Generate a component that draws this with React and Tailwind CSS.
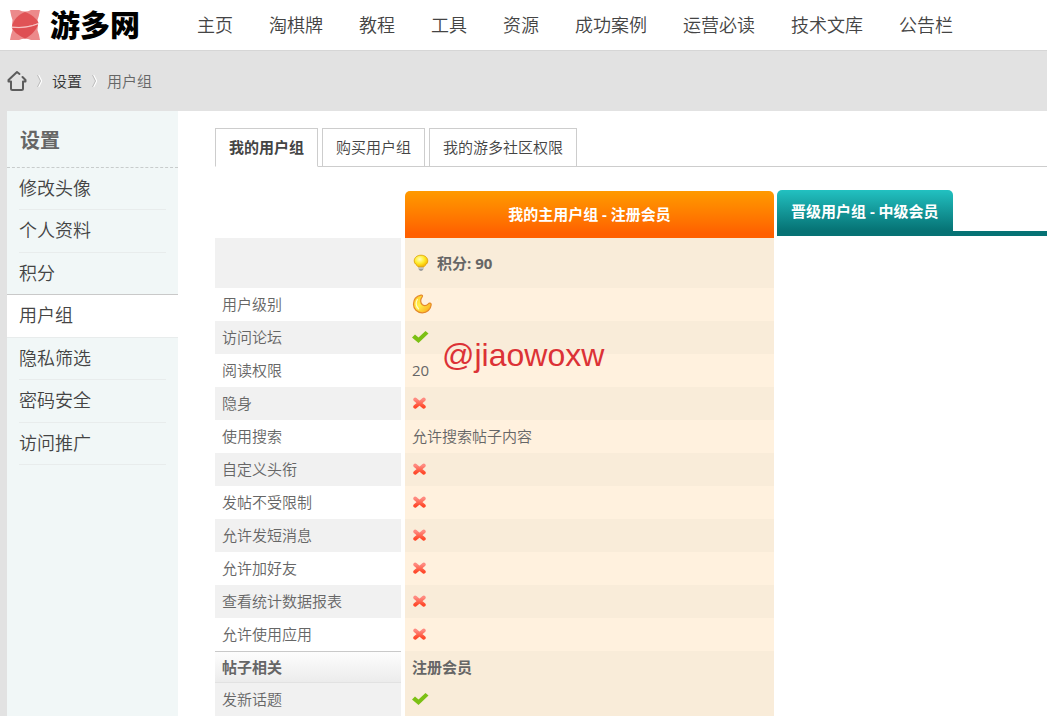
import React from "react";

const NAV = ["主页", "淘棋牌", "教程", "工具", "资源", "成功案例", "运营必读", "技术文库", "公告栏"];
const SIDE = ["修改头像", "个人资料", "积分", "用户组", "隐私筛选", "密码安全", "访问推广"];
const TABS = ["我的用户组", "购买用户组", "我的游多社区权限"];

const ROWS = [
  ["用户级别", "moon"],
  ["访问论坛", "yes"],
  ["阅读权限", "20"],
  ["隐身", "no"],
  ["使用搜索", "允许搜索帖子内容"],
  ["自定义头衔", "no"],
  ["发帖不受限制", "no"],
  ["允许发短消息", "no"],
  ["允许加好友", "no"],
  ["查看统计数据报表", "no"],
  ["允许使用应用", "no"],
];

function LogoMark() {
  return (
    <svg width="30" height="30" viewBox="0 0 30 30" aria-hidden="true">
      <path d="M0 0H30Q29 6 27.500 10Q28.500 15 27.500 20Q29 24 30 30H21Q15 27.500 9 30H0Q1 24 2.500 20Q1.500 15 2.500 10Q1 6 0 0Z" fill="#ec8a8b" />
      <path d="M9 0Q15 3 21 0Z" fill="#fff" />
      <path d="M15 2C20 3.500 27.500 9 28.500 13C18 17 10 17.500 2 16.500C3 10 9 4 15 2Z" fill="#e05356" />
      <path d="M2 17.800C11 19 20 17.500 28.200 14.500C26 20 21 26 15 28.500C8 25.500 3 21 2 17.800Z" fill="#de4f53" />
      <path d="M1.500 17.200Q17 18.500 28.500 13.500" fill="none" stroke="#f8caca" strokeWidth="1" />
    </svg>
  );
}

function HomeIcon() {
  return (
    <svg width="20" height="22" viewBox="0 0 20 22" aria-hidden="true" fill="none" stroke="#5c5c5c" strokeWidth="2" strokeLinejoin="round" strokeLinecap="round">
      <path d="M12.500 4L10 2L1.500 10V11.500H4V18.500Q4 20 5.500 20H14.500Q16 20 16 18.500V11.500H18.500V10L15.500 7" />
    </svg>
  );
}

function Chevron() {
  return (
    <svg width="5" height="14" viewBox="0 0 5 14" aria-hidden="true" fill="none">
      <path d="M1.500 1L4.500 7L1.500 13" stroke="#fff" strokeWidth="1.500" />
      <path d="M.5 1L3.500 7L.5 13" stroke="#bbb" strokeWidth="1" />
    </svg>
  );
}

function BulbIcon() {
  return (
    <svg width="16" height="18" viewBox="0 0 16 18" aria-hidden="true">
      <defs>
        <radialGradient id="bulb" cx=".4" cy=".35" r=".65">
          <stop offset="0" stopColor="#fffcc0" />
          <stop offset=".55" stopColor="#ffec2c" />
          <stop offset="1" stopColor="#f6b500" />
        </radialGradient>
      </defs>
      <path d="M5.500 12.500H10.500V15Q9.500 17 8 17Q6.500 17 5.500 15Z" fill="#999" />
      <path d="M5.500 14H10.500" stroke="#eee" />
      <path d="M8 1.200C4 1.200 1.200 3.700 1.200 6.900C1.200 10 4 10.800 5 12.800H11C12 10.800 14.800 10 14.800 6.900C14.800 3.700 12 1.200 8 1.200Z" fill="url(#bulb)" stroke="#dca000" strokeWidth=".8" />
    </svg>
  );
}

function MoonIcon() {
  return (
    <svg width="20" height="20" viewBox="0 0 20 20" aria-label="1" role="img">
      <defs>
        <linearGradient id="moon" x1="0" y1="0" x2="1" y2="1">
          <stop offset="0" stopColor="#ffc21c" />
          <stop offset=".45" stopColor="#fff04a" />
          <stop offset="1" stopColor="#fb9c13" />
        </linearGradient>
      </defs>
      <path d="M9 1.200C10.500 .9 10.800 1.800 10.300 2.600C8 5.500 8.200 9 10.500 10.800C12.500 12.200 14.500 11.800 16.300 9.800C17.300 8.600 19.300 9 19.200 10.700C18.800 15.300 15 18.800 10.300 18.800C5.200 18.800 1.500 15 1.500 10.200C1.500 5.600 4.500 2.100 9 1.200Z" fill="url(#moon)" stroke="#e5892a" strokeWidth="1.200" strokeLinejoin="round" />
      <path d="M5.300 5.500C3.500 8.500 3.800 12.500 6.500 14.800" fill="none" stroke="#fffbd0" strokeWidth="1.200" strokeLinecap="round" />
    </svg>
  );
}

function YesIcon() {
  return (
    <svg width="17" height="14" viewBox="0 0 17 14" aria-label="是" role="img">
      <path d="M0 7.500L3 4.500L6.500 7.500L13.500 1L16.500 3.500L6.500 13Z" fill="#7cc014" />
    </svg>
  );
}

function NoIcon() {
  return (
    <svg width="14" height="14" viewBox="0 0 14 14" aria-label="否" role="img">
      <defs>
        <linearGradient id="no" x1="0" y1="0" x2="0" y2="1">
          <stop offset="0" stopColor="#ff8a80" />
          <stop offset="1" stopColor="#ff4a2c" />
        </linearGradient>
      </defs>
      <path d="M3.200 3.500L11.800 10.700M11.800 3.500L3.200 10.700" fill="none" stroke="url(#no)" strokeWidth="3.800" strokeLinecap="round" />
    </svg>
  );
}

function Value({ value }) {
  if (value === "moon") return <MoonIcon />;
  if (value === "yes") return <YesIcon />;
  if (value === "no") return <NoIcon />;
  return value;
}

function Row({ label, value, shaded }) {
  return (
    <tr className="h-[33px]">
      <th scope="row" className={`border-r-4 border-white bg-clip-padding pb-0.5 pl-[7px] text-left font-[350] ${shaded ? "bg-[#f1f1f1]" : ""}`}>
        {label}
      </th>
      <td className={`border-r-[3px] border-white bg-clip-padding pb-0.5 pl-[7px] ${value === "20" ? "font-normal" : ""} ${shaded ? "bg-[#f9ecd9]" : "bg-[#fff1de]"}`}>
        <div className="flex items-center">
          <Value value={value} />
        </div>
      </td>
      <td />
    </tr>
  );
}

export default function App() {
  return (
    <div className="relative h-screen overflow-hidden bg-[#e2e2e2] font-['Open_Sans','Noto_Sans_CJK_SC',sans-serif] text-[15px] leading-5 font-[350] text-[#666]">
      <header className="flex h-[51px] items-center border-b border-[#d6d6d6] bg-white pl-2.5">
        <a href="#home" className="flex w-[187px] shrink-0 items-center gap-2.5 text-[30px] leading-[50px] font-black text-black">
          <LogoMark />
          游多网
        </a>
        <nav className="flex gap-9 text-lg whitespace-nowrap text-[#444]">
          {NAV.map((item) => (
            <a key={item} href="#nav">{item}</a>
          ))}
        </nav>
      </header>

      <nav aria-label="路径" className="flex h-[60px] items-center gap-2.5 pl-[7px]">
        <a href="#home" aria-label="首页"><HomeIcon /></a>
        <Chevron />
        <a href="#settings" className="text-[#333]">设置</a>
        <Chevron />
        <a href="#groups">用户组</a>
      </nav>

      <div className="ml-[7px] flex min-h-screen bg-white">
        <aside className="w-[171px] shrink-0 bg-[#f1f7f7]">
          <h2 className="flex h-[57px] items-center border-b border-dashed border-[#c8cccc] pt-1 pl-[13px] text-xl font-bold">设置</h2>
          <ul className="text-lg text-[#444]">
            {SIDE.map((item) => (
              <li
                key={item}
                className={
                  item === "用户组"
                    ? "-mt-px h-[44px] border-y border-t-[#c9c9c9] border-b-[#e8ecec] bg-white"
                    : "mx-3 h-[42px] border-b border-[#e8ecec] even:h-[43px]"
                }
              >
                <a href="#item" className={`flex h-full items-center pb-0.5 ${item === "用户组" ? "pl-3" : ""}`}>{item}</a>
              </li>
            ))}
          </ul>
        </aside>

        <main className="min-w-0 flex-1 pt-[17px] pl-[37px]">
          <div className="flex gap-1 border-b border-[#cdcdcd] text-[#444]">
            {TABS.map((tab, i) => (
              <a
                key={tab}
                href="#tab"
                className={`border border-[#cdcdcd] px-[13px] leading-[37px] ${i === 0 ? "-mb-px border-b-white font-bold" : "border-b-0"}`}
              >
                {tab}
              </a>
            ))}
          </div>

          <table className="mt-[23px] w-full table-fixed border-separate border-spacing-0">
            <colgroup>
              <col className="w-[190px]" />
              <col className="w-[372px]" />
              <col />
            </colgroup>
            <thead>
              <tr className="h-12 text-white">
                <td className="p-0" />
                <th scope="col" className="p-0 pr-[3px] align-bottom">
                  <div className="h-[47px] rounded-t-[5px] bg-linear-to-b from-[#ff9a00] to-[#ff6000] to-90% leading-[47px] font-bold">
                    我的主用户组 - 注册会员
                  </div>
                </th>
                <th scope="col" className="p-0 text-left align-top">
                  <div className="border-b-[5px] border-[#067274]">
                    <a href="#next" className="inline-block h-[41px] rounded-t-[5px] bg-linear-to-b from-[#22c1c1] to-[#067274] px-3.5 align-top leading-[43px] font-bold">
                      晋级用户组 - 中级会员
                    </a>
                  </div>
                </th>
              </tr>
            </thead>
            <tbody>
              <tr className="h-[50px]">
                <td className="border-r-4 border-white bg-[#f1f1f1] bg-clip-padding" />
                <td className="border-r-[3px] border-white bg-[#f9ecd9] bg-clip-padding pl-2 font-bold">
                  <div className="flex items-center gap-2">
                    <BulbIcon />
                    积分: 90
                  </div>
                </td>
                <td />
              </tr>
              {ROWS.map(([label, value], i) => (
                <Row key={label} label={label} value={value} shaded={i % 2 === 1} />
              ))}
              <tr className="h-8 font-bold">
                <th scope="row" className="border-r-4 border-white p-0 text-left">
                  <div className="flex h-8 items-center border-y border-t-[#c9c9c9] border-b-[#e2e2e2] bg-linear-to-b from-[#fdfdfd] to-[#ececec] pl-[7px]">
                    帖子相关
                  </div>
                </th>
                <td className="border-r-[3px] border-white bg-[#f9ecd9] bg-clip-padding pl-[7px]">注册会员</td>
                <td />
              </tr>
              <Row label="发新话题" value="yes" shaded />
            </tbody>
          </table>
        </main>
      </div>

      <span className="absolute top-[337px] left-[442px] font-['Liberation_Sans',sans-serif] text-[32px] leading-9 font-normal text-[#dc3236]">
        @jiaowoxw
      </span>
    </div>
  );
}
